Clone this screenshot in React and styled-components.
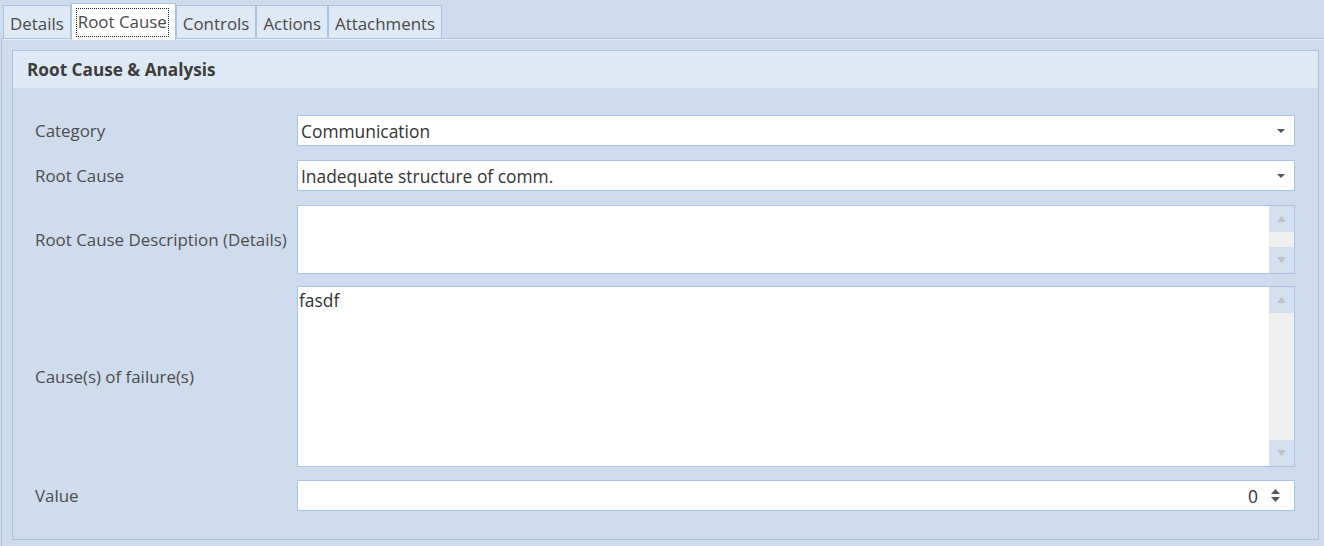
import React from "react";
import styled, { createGlobalStyle } from "styled-components";

const Global = createGlobalStyle`
  html, body { margin: 0; padding: 0; }
  body {
    background: #cfdcee;
    font-family: "Open Sans", "Noto Sans", sans-serif;
    color: #444;
  }
`;

const Screen = styled.div`
  width: 1324px;
  height: 546px;
  overflow: hidden;
  background: #cfdcee;
`;

const TabStrip = styled.div`
  display: flex;
  align-items: flex-end;
  height: 38px;
  padding: 3px 0 0 3px;
  box-sizing: border-box;
  position: relative;
  z-index: 1;
`;

const Tab = styled.div`
  box-sizing: border-box;
  height: ${(p) => (p.$active ? "37px" : "33px")};
  margin-bottom: ${(p) => (p.$active ? "-2px" : "0")};
  padding: ${(p) => (p.$active ? "0 6px 0 4px" : "2px 6px 0 6px")};
  margin-right: 0;
  border: 1px solid #a9c3e6;
  border-bottom: none;
  background: ${(p) => (p.$active ? "#ffffff" : "#dfe8f5")};
  display: flex;
  align-items: center;
  font-size: 16.9px;
  color: #4a4a4a;
  white-space: nowrap;
`;

const Focus = styled.span`
  border: 1px dotted #222;
  padding: 2px 1px 3px;
  line-height: 22px;
`;

const TabPage = styled.div`
  margin-left: 1px;
  border-top: 1px solid #a9c3e6;
  border-left: 1px solid #a9c3e6;
  box-shadow: inset 0 1px 0 #e4ecf7;
  padding: 11px 5px 0 10px;
  height: 520px;
  box-sizing: border-box;
`;

const Group = styled.div`
  width: 1307px;
  border: 1px solid #a9c3e6;
  box-sizing: border-box;
`;

const GroupHeader = styled.div`
  height: 37px;
  background: #dfe9f5;
  display: flex;
  align-items: center;
  padding-left: 14px;
  font-weight: 700;
  font-size: 17.2px;
  color: #3d3d3d;
`;

const Form = styled.div`
  display: flex;
  flex-direction: column;
  padding: 27px 23px 28px 22px;
`;

const Row = styled.div`
  display: grid;
  grid-template-columns: 262px 1fr;
  align-items: center;
  margin-top: ${(p) => p.$gap || 0}px;
`;

const Label = styled.div`
  font-size: 16.9px;
  color: #4d4d4d;
`;

const Box = styled.div`
  box-sizing: border-box;
  height: ${(p) => p.$h}px;
  border: 1px solid #a9c3e6;
  background: #fff;
  display: flex;
  align-items: ${(p) => (p.$multi ? "stretch" : "center")};
  font-size: 17.4px;
  color: #333;
`;

const Value = styled.div`
  flex: 1;
  padding: ${(p) => (p.$multi ? "1px 0 0 1px" : "0 0 0 3px")};
  text-align: ${(p) => (p.$right ? "right" : "left")};
`;

const DropButton = styled.div`
  width: 26px;
  display: flex;
  align-items: center;
  justify-content: center;
`;

const ScrollBar = styled.div`
  width: 25px;
  display: flex;
  flex-direction: column;
  background: #efefef;
`;

const ScrollBtn = styled.div`
  height: 26px;
  background: #d4e0f0;
  display: flex;
  align-items: center;
  justify-content: center;
`;

const Track = styled.div`
  flex: 1;
`;

const Spin = styled.div`
  width: 26px;
  display: flex;
  flex-direction: column;
  align-items: center;
  justify-content: center;
  gap: 3px;
  padding-right: 6px;
  padding-left: 4px;
`;

const Tri = ({ up, color = "#555", w = 8, h = 4 }) => (
  <svg width={w} height={h} viewBox={`0 0 ${w} ${h}`}>
    {up ? (
      <polygon points={`0,${h} ${w},${h} ${w / 2},0`} fill={color} />
    ) : (
      <polygon points={`0,0 ${w},0 ${w / 2},${h}`} fill={color} />
    )}
  </svg>
);

const Scroll = () => (
  <ScrollBar>
    <ScrollBtn>
      <Tri up color="#bfc4cb" w={9} h={6} />
    </ScrollBtn>
    <Track />
    <ScrollBtn>
      <Tri color="#bfc4cb" w={9} h={6} />
    </ScrollBtn>
  </ScrollBar>
);

export default function App() {
  const tabs = ["Details", "Root Cause", "Controls", "Actions", "Attachments"];
  return (
    <Screen>
      <Global />
      <TabStrip>
        {tabs.map((t) =>
          t === "Root Cause" ? (
            <Tab key={t} $active>
              <Focus>{t}</Focus>
            </Tab>
          ) : (
            <Tab key={t}>{t}</Tab>
          )
        )}
      </TabStrip>
      <TabPage>
        <Group>
          <GroupHeader>Root Cause &amp; Analysis</GroupHeader>
          <Form>
            <Row>
              <Label>Category</Label>
              <Box $h={31}>
                <Value>Communication</Value>
                <DropButton>
                  <Tri />
                </DropButton>
              </Box>
            </Row>
            <Row $gap={14}>
              <Label>Root Cause</Label>
              <Box $h={31}>
                <Value>Inadequate structure of comm.</Value>
                <DropButton>
                  <Tri />
                </DropButton>
              </Box>
            </Row>
            <Row $gap={14}>
              <Label>Root Cause Description (Details)</Label>
              <Box $h={69} $multi>
                <Value $multi></Value>
                <Scroll />
              </Box>
            </Row>
            <Row $gap={12}>
              <Label>Cause(s) of failure(s)</Label>
              <Box $h={181} $multi>
                <Value $multi>fasdf</Value>
                <Scroll />
              </Box>
            </Row>
            <Row $gap={13}>
              <Label>Value</Label>
              <Box $h={31}>
                <Value $right>0</Value>
                <Spin>
                  <Tri up w={9} h={5} />
                  <Tri w={9} h={5} />
                </Spin>
              </Box>
            </Row>
          </Form>
        </Group>
      </TabPage>
    </Screen>
  );
}
